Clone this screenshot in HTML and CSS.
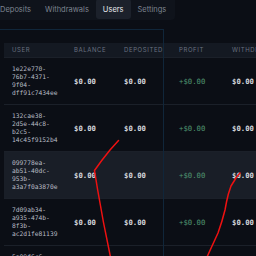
FILE: index.html
```html
<!DOCTYPE html>
<html>
<head>
  <title>Admin - Users</title>
  <link rel="stylesheet" href="styles.css">
</head>
<body>
  <nav class="tabs">
    <span class="tab">Deposits</span>
    <span class="tab">Withdrawals</span>
    <span class="tab active">Users</span>
    <span class="tab">Settings</span>
  </nav>

  <div class="panel">
    <div class="users">
      <div class="row head">
        <div class="cell">User</div>
        <div class="cell">Balance</div>
        <div class="cell">Deposited</div>
        <div class="cell">Profit</div>
        <div class="cell">Withdrawn</div>
      </div>
      <div class="row">
        <div class="cell id">1e22e770-76b7-4371-9f04-dff91c7434ee</div>
        <div class="cell money">$0.00</div>
        <div class="cell money">$0.00</div>
        <div class="cell profit">+$0.00</div>
        <div class="cell money">$0.00</div>
      </div>
      <div class="row">
        <div class="cell id">132cae38-2d5e-44c8-b2c5-14c45f9152b4</div>
        <div class="cell money">$0.00</div>
        <div class="cell money">$0.00</div>
        <div class="cell profit">+$0.00</div>
        <div class="cell money">$0.00</div>
      </div>
      <div class="row hover">
        <div class="cell id">099778ea-ab51-40dc-953b-a3a7f0a3870e</div>
        <div class="cell money">$0.00</div>
        <div class="cell money">$0.00</div>
        <div class="cell profit">+$0.00</div>
        <div class="cell money">$0.00</div>
      </div>
      <div class="row">
        <div class="cell id">7d09ab34-a935-474b-8f3b-ac2d1fe81139</div>
        <div class="cell money">$0.00</div>
        <div class="cell money">$0.00</div>
        <div class="cell profit">+$0.00</div>
        <div class="cell money">$0.00</div>
      </div>
      <div class="row">
        <div class="cell id">5a09f6c6-3b2e-4f1a-9c7d-0e4b8a6f2d15</div>
        <div class="cell money">$0.00</div>
        <div class="cell money">$0.00</div>
        <div class="cell profit">+$0.00</div>
        <div class="cell money">$0.00</div>
      </div>
    </div>
  </div>

  <div class="focus-ring"></div>

  <svg class="scribble" width="256" height="256" viewBox="0 0 256 256">
    <path d="M118.5 140.5 L110 150 Q101 161 94.5 170.5 L97.5 189 Q103 222 110.5 257"/>
    <path d="M240 173 Q237 176 236 178 L231 186 Q228 194 226.5 202 L225 210 Q222 222 218 233 L207 257"/>
  </svg>
</body>
</html>
```

FILE: styles.css
```css
body {
  margin: 0;
  padding: 0;
  width: 256px;
  height: 256px;
  overflow: hidden;
  position: relative;
  background: #0b0e15;
  font-family: Inter, "Noto Sans", sans-serif;
  color: #d1d5db;
}

.tabs {
  display: flex;
  width: fit-content;
  margin: -3px 0 0 -9px;
  padding: 2px 2px 1px 2px;
  background: #0f131b;
  border-radius: 0 0 4px 0;
}

.tab {
  height: 20px;
  padding: 0 7px;
  display: flex;
  align-items: center;
  padding-top: 1px;
  box-sizing: border-box;
  font-size: 7.5px;
  color: #7d8390;
  border-radius: 3px;
}

.tab.active {
  background: #1c212b;
  color: #e8eaee;
}

.panel {
  padding: 23px 0 0 4px;
}

.users {
  width: 290px;
}

.row {
  display: grid;
  grid-template-columns: 62px 50px 55px 53px 70px;
  border-bottom: 1px solid #1b2029;
  align-items: center;
}

.row.hover {
  background: #191e27;
}

.cell {
  padding: 7px 0 7px 8px;
  font-family: "DejaVu Sans Mono", monospace;
  white-space: nowrap;
}

.head {
  background: #141922;
}

.head .cell {
  padding: 0 0 0 8px;
  height: 14px;
  line-height: 14px;
  font-family: Inter, "Noto Sans", sans-serif;
  font-size: 6px;
  letter-spacing: 0.6px;
  text-transform: uppercase;
  color: #697180;
}

.id {
  font-size: 6.3px;
  line-height: 8px;
  color: #b9bdc5;
  white-space: normal;
  padding-right: 8px;
}

.money {
  font-size: 7.3px;
  font-weight: bold;
  color: #d3d6dc;
}

.profit {
  font-size: 7.3px;
  color: #4f9470;
}

.focus-ring {
  position: absolute;
  left: -10px;
  top: 29px;
  width: 172px;
  height: 240px;
  border: 1px solid #10263a;
}

.scribble {
  position: absolute;
  left: 0;
  top: 0;
  pointer-events: none;
}

.scribble path {
  fill: none;
  stroke: #ee1111;
  stroke-width: 1.5;
  stroke-linecap: round;
  stroke-linejoin: round;
}
```
